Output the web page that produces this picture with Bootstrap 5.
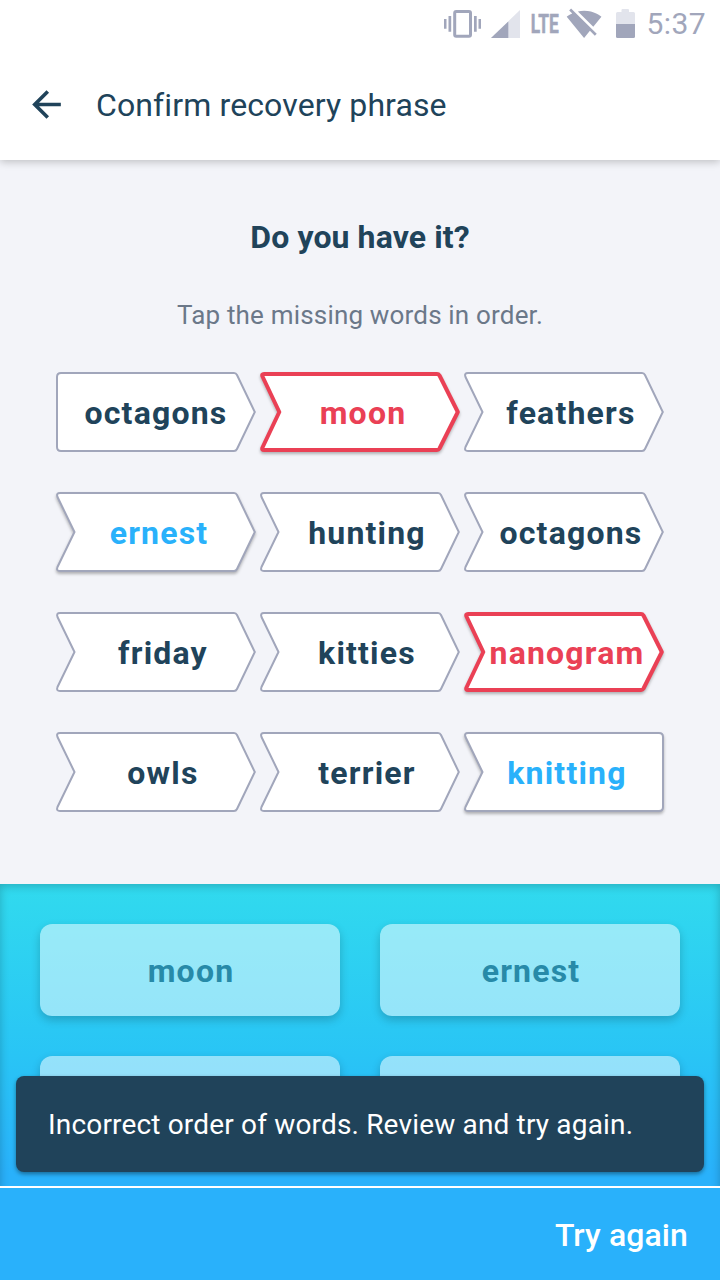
<!DOCTYPE html>
<html lang="en"><head><meta charset="utf-8"><meta name="viewport" content="width=device-width, initial-scale=1">
<title>Confirm recovery phrase</title>
<link href="https://cdn.jsdelivr.net/npm/bootstrap@5.3.0/dist/css/bootstrap.min.css" rel="stylesheet">
<style>
body{font-family:Roboto,"Liberation Sans",sans-serif;color:#20435a;background:#f3f4f9;width:720px;height:1280px;overflow:hidden}
.top-bar{height:160px;box-shadow:0 2px 8px rgba(0,0,0,.22);z-index:1}
.status-row{height:48px}
.title-row{height:112px}
.title-row svg{margin-left:25px}
.title-text{font-size:32px;line-height:40px;margin-left:28px;padding-top:2px;letter-spacing:.12px}
.check-area{height:724px;padding-top:57px}
.ask{font-size:32px;line-height:40px;font-weight:700;letter-spacing:.1px}
.hint{font-size:26px;line-height:32px;color:#6b7889;letter-spacing:.18px;margin-top:42px}
.phrase{display:grid;grid-template-columns:repeat(3,200px);column-gap:4px;row-gap:40px;margin-top:41px;justify-content:center}
.word{height:80px;font-size:32px;font-weight:700;letter-spacing:1.2px;padding-left:14px;padding-top:2px}
.word svg{position:absolute;left:0;top:0;overflow:visible}
.word span{position:relative}
.word use{fill:#fff;stroke:#a1a6bb;stroke-width:2}
.word.first{padding-left:0}
.word.picked,.word.wrong{padding-left:6px}
.word.picked{color:#29b1fb}
.word.wrong{color:#ea4055}
.word.wrong use{stroke:#ea4055;stroke-width:4;stroke-linejoin:round}
.picked svg,.wrong svg{filter:drop-shadow(0 2px 1.5px rgba(0,0,0,.28))}
.bank{height:302px;padding:40px;background:linear-gradient(#31daee,#29c5f5 56%,#29b1fb 96%);overflow:hidden}
.bank:after{content:"";position:absolute;inset:0 0 -20px;box-shadow:inset 0 2px 10px rgba(0,0,0,.22);pointer-events:none}
.choices{display:grid;grid-template-columns:300px 300px;gap:40px}
.choice{position:relative;height:92px;border-radius:12px;background:rgba(255,255,255,.5);color:#278aa8;font-size:32px;font-weight:700;letter-spacing:1.2px;border:0;padding:2px 0 0 2px}
.choice-shade{position:absolute;left:-20px;top:-20px;pointer-events:none}
.snack{left:16px;right:16px;top:1076px;height:96px;background:#20435a;border-radius:8px;color:#fff;font-size:28px;padding:2px 0 0 32px;letter-spacing:.17px;box-shadow:0 2px 4px rgba(0,0,0,.4);z-index:3}
.retry-bar{height:94px;border-top:2px solid #fff;background:#29b1fb;padding-right:32px}
.retry{font-size:32px;font-weight:500;color:#fff;padding:1px 0 0;letter-spacing:.1px}
</style></head><body>
<svg width="0" height="0" class="position-absolute"><defs>
<path id="c-first" d="M5 1H178Q180 1 181 3L198.8 40L181 77Q180 79 178 79H5Q1 79 1 75V5Q1 1 5 1Z"/>
<path id="c-mid" d="M4 1H178Q180 1 181 3L198.8 40L181 77Q180 79 178 79H4Q0 79 1.5 75L18.5 40L1.5 5Q0 1 4 1Z"/>
<path id="c-bad" d="M4 2H177Q178.600 2 179.500 3.500L197.800 40L179.500 76.500Q178.600 78 177 78H4Q1.500 78 2.500 75.500L19.300 40L2.500 4.500Q1.500 2 4 2Z"/>
<path id="c-last" d="M4 1H195Q199 1 199 5V75Q199 79 195 79H4Q0 79 1.500 75L18.500 40L1.500 5Q0 1 4 1Z"/>
<mask id="outside"><rect width="340" height="140" fill="#fff"/><rect x="20" y="20" width="300" height="92" rx="12" fill="#000"/></mask>
<filter id="soft" x="-10%" y="-20%" width="120%" height="150%"><feGaussianBlur stdDeviation="5"/></filter>
<g id="shade" mask="url(#outside)"><rect x="20" y="24" width="300" height="92" rx="12" opacity=".2" filter="url(#soft)"/></g>
</defs></svg>
<header class="top-bar bg-white position-relative">
<div class="status-row"><svg width="720" height="48" fill="#a1a6bb">
<rect x="454.700" y="11.500" width="15.800" height="24.800" rx="1.500" fill="none" stroke="#a1a6bb" stroke-width="3"/>
<path d="M448.500 16h2.700v15.700h-2.700zM444 19h2.500v9.700H444zM474 16h2.700v15.700H474zM478.500 19h2.500v9.700h-2.500z"/>
<path d="M491 38L520 10V38Z" fill="#e2e4ec"/><path d="M491 38L508.300 21.500V38Z"/>
<text x="530.700" y="33" font-size="25" font-weight="700" textLength="28" lengthAdjust="spacingAndGlyphs" stroke="#a1a6bb" stroke-width=".5">LTE</text>
<path transform="translate(566.200 6.400) scale(1.490 1.470)" d="M23.640 7c-.45-.34-4.930-4-11.640-4-1.500 0-2.890.19-4.150.48L18.180 13.800 23.640 7zm-6.600 8.220L3.270 1.440 2 2.720l2.050 2.060C1.910 5.760.59 6.820.36 7l11.630 14.490.01.01.01-.01 3.900-4.860 3.320 3.320 1.270-1.270-3.460-3.460z"/>
<path d="M617.500 12H621.500V10Q621.500 9 622.500 9H628Q629 9 629 10V12H633.500Q635 12 635 13.500V24H616V13.500Q616 12 617.500 12Z" fill="#e2e4ec"/><path d="M616 24H635V36.500Q635 38 633.500 38H617.500Q616 38 616 36.500Z"/>
<text x="646.500" y="34" font-size="30" textLength="59">5:37</text>
</svg></div>
<div class="title-row d-flex align-items-center"><svg width="43" height="43" viewBox="0 0 24 24" fill="#20435a"><path d="M20 11H7.830l5.590-5.590L12 4l-8 8 8 8 1.410-1.410L7.830 13H20v-2z"/></svg><span class="title-text">Confirm recovery phrase</span></div>
</header>
<main class="check-area text-center">
<h1 class="ask m-0">Do you have it?</h1>
<p class="hint mb-0">Tap the missing words in order.</p>
<div class="phrase">
<div class="word first position-relative d-flex align-items-center justify-content-center"><svg width="200" height="80"><use href="#c-first"/></svg><span>octagons</span></div>
<div class="word wrong position-relative d-flex align-items-center justify-content-center"><svg width="200" height="80"><use href="#c-bad"/></svg><span>moon</span></div>
<div class="word position-relative d-flex align-items-center justify-content-center"><svg width="200" height="80"><use href="#c-mid"/></svg><span>feathers</span></div>
<div class="word picked position-relative d-flex align-items-center justify-content-center"><svg width="200" height="80"><use href="#c-mid"/></svg><span>ernest</span></div>
<div class="word position-relative d-flex align-items-center justify-content-center"><svg width="200" height="80"><use href="#c-mid"/></svg><span>hunting</span></div>
<div class="word position-relative d-flex align-items-center justify-content-center"><svg width="200" height="80"><use href="#c-mid"/></svg><span>octagons</span></div>
<div class="word position-relative d-flex align-items-center justify-content-center"><svg width="200" height="80"><use href="#c-mid"/></svg><span>friday</span></div>
<div class="word position-relative d-flex align-items-center justify-content-center"><svg width="200" height="80"><use href="#c-mid"/></svg><span>kitties</span></div>
<div class="word wrong position-relative d-flex align-items-center justify-content-center"><svg width="200" height="80"><use href="#c-bad"/></svg><span>nanogram</span></div>
<div class="word position-relative d-flex align-items-center justify-content-center"><svg width="200" height="80"><use href="#c-mid"/></svg><span>owls</span></div>
<div class="word position-relative d-flex align-items-center justify-content-center"><svg width="200" height="80"><use href="#c-mid"/></svg><span>terrier</span></div>
<div class="word picked position-relative d-flex align-items-center justify-content-center"><svg width="200" height="80"><use href="#c-last"/></svg><span>knitting</span></div>
</div></main>
<section class="bank position-relative"><div class="choices">
<button class="choice"><svg class="choice-shade" width="340" height="140"><use href="#shade"/></svg>moon</button>
<button class="choice"><svg class="choice-shade" width="340" height="140"><use href="#shade"/></svg>ernest</button>
<button class="choice" aria-label="Used word"><svg class="choice-shade" width="340" height="140"><use href="#shade"/></svg></button>
<button class="choice" aria-label="Used word"><svg class="choice-shade" width="340" height="140"><use href="#shade"/></svg></button>
</div></section>
<div class="snack position-absolute d-flex align-items-center" role="alert">Incorrect order of words. Review and try again.</div>
<footer class="retry-bar d-flex align-items-center justify-content-end"><button class="btn retry border-0">Try again</button></footer>
<script src="https://cdn.jsdelivr.net/npm/bootstrap@5.3.0/dist/js/bootstrap.bundle.min.js"></script>
</body></html>
